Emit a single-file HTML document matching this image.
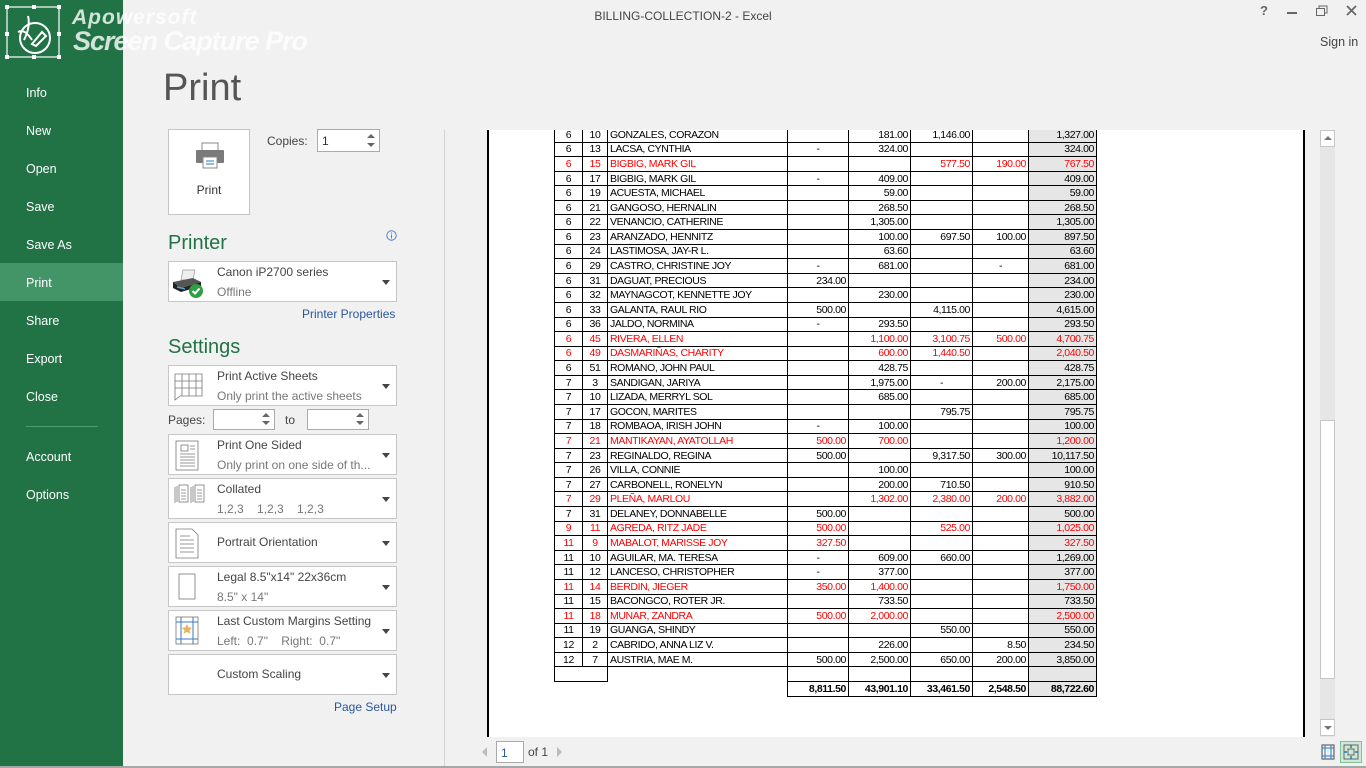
<!DOCTYPE html>
<html><head><meta charset="utf-8">
<style>
*{margin:0;padding:0;box-sizing:border-box}
body{width:1366px;height:768px;overflow:hidden;background:#f1f1f1;font-family:"Liberation Sans",sans-serif;position:relative;color:#444}
.abs{position:absolute}
#side{left:0;top:0;width:123px;height:768px;background:#217346}
#side div.m{position:absolute;left:26px;color:#fff;font-size:12.5px}
#sel{position:absolute;left:0;top:263px;width:123px;height:38px;background:#439467}
.box{position:absolute;left:168px;width:229px;background:#fff;border:1px solid #c6c6c6}
.box .t1{position:absolute;left:48px;top:3px;font-size:12px;color:#444;white-space:nowrap}
.box .t2{position:absolute;left:48px;top:23px;font-size:12px;color:#777;white-space:nowrap}
.box .arr{position:absolute;right:6px;top:50%;margin-top:-2px;width:0;height:0;border-left:4px solid transparent;border-right:4px solid transparent;border-top:5px solid #444}
.box svg{position:absolute;left:5px;top:5px}
.link{position:absolute;font-size:12px;color:#2b579a}
#page{left:487px;top:130px;width:818px;height:607px;background:#fff;border-left:2px solid #000;border-right:2px solid #000;overflow:hidden}
table{position:absolute;left:65px;top:-3px;border-collapse:collapse;table-layout:fixed;font-size:10.5px;letter-spacing:-0.4px;color:#000}
td{height:14.58px;padding:0 2px;border:1px solid #000;white-space:nowrap;overflow:hidden;line-height:12px;text-align:right}
td:nth-child(1),td:nth-child(2){text-align:center}
td:nth-child(3){text-align:left}
td:nth-child(8){background:#e6e6e6}
tr.r td{color:#f00}
tr.nb td{border-bottom:none}
tr.tot td{font-weight:bold}
</style></head><body>
<div id="side" class="abs">
<div id="sel"></div>
<div class="m" style="top:86px">Info</div>
<div class="m" style="top:124px">New</div>
<div class="m" style="top:162px">Open</div>
<div class="m" style="top:200px">Save</div>
<div class="m" style="top:238px">Save As</div>
<div class="m" style="top:276px">Print</div>
<div class="m" style="top:314px">Share</div>
<div class="m" style="top:352px">Export</div>
<div class="m" style="top:390px">Close</div>
<div style="position:absolute;left:26px;top:426px;width:72px;height:1px;background:#4f9a6e"></div>
<div class="m" style="top:450px">Account</div>
<div class="m" style="top:488px">Options</div>
</div>
<svg class="abs" style="left:4px;top:4px" width="58" height="56" viewBox="0 0 58 56"><rect x="3" y="3" width="52" height="50" fill="none" stroke="#fff" stroke-width="1.2"/><g fill="#fff"><rect x="1" y="1" width="4" height="4"/><rect x="28" y="1" width="4" height="4"/><rect x="53" y="1" width="4" height="4"/><rect x="1" y="28" width="4" height="4"/><rect x="53" y="28" width="4" height="4"/><rect x="1" y="51" width="4" height="4"/><rect x="28" y="51" width="4" height="4"/><rect x="53" y="51" width="4" height="4"/></g><circle cx="31" cy="34" r="15" fill="none" stroke="#fff" stroke-width="2"/><path d="M14 28c6-3 10 2 14 8M24 12c2 8 0 16-4 24M28 40l10-12 4 4-10 10z" fill="none" stroke="#fff" stroke-width="2"/></svg>
<div class="abs" style="left:72px;top:6px;font-size:21px;font-weight:bold;font-style:italic;color:rgba(255,255,255,.8);letter-spacing:1px">Apowersoft</div>
<div class="abs" style="left:73px;top:26px;font-size:27px;font-weight:bold;font-style:italic;color:rgba(255,255,255,.8);letter-spacing:-1px">Screen Capture Pro</div>

<div class="abs" style="left:0;width:1366px;top:9px;text-align:center;font-size:12px;color:#444">BILLING-COLLECTION-2 - Excel</div>
<div class="abs" style="left:1260px;top:3px;font-size:13px;font-weight:bold;color:#666">?</div>
<div class="abs" style="left:1287px;top:12px;width:10px;height:2px;background:#666"></div>
<svg class="abs" style="left:1316px;top:5px" width="12" height="12"><rect x="0.5" y="3.5" width="8" height="7" fill="none" stroke="#666"/><path d="M3 3V1h8v7H9" fill="none" stroke="#666"/></svg>
<svg class="abs" style="left:1346px;top:5px" width="11" height="11"><path d="M1 1l9 9M10 1l-9 9" stroke="#666" stroke-width="1.8"/></svg>
<div class="abs" style="left:1320px;top:35px;font-size:12.5px;color:#444">Sign in</div>

<div class="abs" style="left:163px;top:67px;font-size:38px;color:#555">Print</div>
<div class="abs" style="left:168px;top:129px;width:82px;height:86px;background:#fff;border:1px solid #c6c6c6">
<svg style="position:absolute;left:26px;top:12px" width="30" height="28"><rect x="7" y="1" width="16" height="8" fill="#fff" stroke="#888"/><rect x="1" y="8" width="28" height="13" rx="1" fill="#7a7a7a"/><rect x="8" y="15" width="14" height="11" fill="#fff" stroke="#888"/><path d="M11 19h8M11 22h8" stroke="#2b79c2"/></svg>
<div style="position:absolute;left:0;width:80px;top:53px;text-align:center;font-size:12px;color:#333">Print</div></div>
<div class="abs" style="left:267px;top:134px;font-size:12px">Copies:</div>
<div class="abs" style="left:317px;top:129px;width:63px;height:23px;background:#fff;border:1px solid #aaa;font-size:12px;color:#333;padding:4px 4px">1
<div style="position:absolute;right:4px;top:4px;border-left:4px solid transparent;border-right:4px solid transparent;border-bottom:4px solid #666"></div>
<div style="position:absolute;right:4px;top:13px;border-left:4px solid transparent;border-right:4px solid transparent;border-top:4px solid #666"></div></div>

<div class="abs" style="left:168px;top:232px;font-size:20px;color:#217346">Printer</div>
<svg class="abs" style="left:386px;top:230px" width="11" height="11"><circle cx="5.5" cy="5.5" r="4.7" fill="none" stroke="#4a86c8"/><path d="M5.5 4.5v4M5.5 2.5v1" stroke="#4a86c8"/></svg>
<div class="box" style="top:261px;height:41px">
<svg width="34" height="32" style="left:2px;top:6px"><path d="M12 2l12 0 -2 10H10z" fill="#eee" stroke="#999" stroke-width=".7"/><path d="M2 14l20-4 8 4-20 6z" fill="#555"/><path d="M2 14v6l8 4 20-6v-4l-20 6z" fill="#222"/><path d="M6 19l8 2" stroke="#69c" stroke-width="1.5"/><circle cx="25" cy="23" r="7" fill="#2ea043"/><path d="M21.5 23l2.5 2.5 4.5-5" fill="none" stroke="#fff" stroke-width="2"/></svg>
<div class="t1">Canon iP2700 series</div><div class="t2">Offline</div><div class="arr"></div></div>
<div class="link" style="left:302px;top:307px">Printer Properties</div>

<div class="abs" style="left:168px;top:336px;font-size:20px;color:#217346">Settings</div>
<div class="box" style="top:365px;height:41px"><svg width="30" height="30"><path d="M1 3h27v22H6l-5 4z" fill="none" stroke="#777" stroke-width=".8"/><path d="M1 10h27M1 17h27M8 3v22M15 3v22M22 3v22" stroke="#777" stroke-width=".8"/></svg><div class="t1">Print Active Sheets</div><div class="t2">Only print the active sheets</div><div class="arr"></div></div>
<div class="abs" style="left:168px;top:413px;font-size:12px">Pages:</div>
<div class="abs" style="left:213px;top:409px;width:62px;height:21px;background:#fff;border:1px solid #aaa"><div style="position:absolute;right:4px;top:3px;border-left:4px solid transparent;border-right:4px solid transparent;border-bottom:4px solid #666"></div><div style="position:absolute;right:4px;top:11px;border-left:4px solid transparent;border-right:4px solid transparent;border-top:4px solid #666"></div></div>
<div class="abs" style="left:285px;top:413px;font-size:12px">to</div>
<div class="abs" style="left:307px;top:409px;width:62px;height:21px;background:#fff;border:1px solid #aaa"><div style="position:absolute;right:4px;top:3px;border-left:4px solid transparent;border-right:4px solid transparent;border-bottom:4px solid #666"></div><div style="position:absolute;right:4px;top:11px;border-left:4px solid transparent;border-right:4px solid transparent;border-top:4px solid #666"></div></div>
<div class="box" style="top:434px;height:41px"><svg width="30" height="32"><rect x="2" y="1" width="22" height="29" fill="none" stroke="#777" stroke-width=".8"/><rect x="7" y="5" width="7" height="6" fill="none" stroke="#777" stroke-width=".8"/><path d="M16 6h5M16 9h5M6 14h15M6 17h15M6 20h15M6 23h15M6 26h15" stroke="#777" stroke-width=".8"/></svg><div class="t1">Print One Sided</div><div class="t2">Only print on one side of th...</div><div class="arr"></div></div>
<div class="box" style="top:478px;height:41px"><svg width="34" height="22"><path d="M1 3v16M3 2v16" stroke="#777" stroke-width=".8"/><rect x="5" y="1" width="9" height="17" fill="none" stroke="#777" stroke-width=".8"/><path d="M17 3v16M19 2v16" stroke="#777" stroke-width=".8"/><rect x="21" y="1" width="9" height="17" fill="none" stroke="#777" stroke-width=".8"/><path d="M7 6h5M7 9h5M7 12h5M7 15h5M23 6h5M23 9h5M23 12h5M23 15h5" stroke="#777" stroke-width=".8"/></svg><div class="t1">Collated</div><div class="t2">1,2,3&nbsp;&nbsp;&nbsp; 1,2,3&nbsp;&nbsp;&nbsp; 1,2,3</div><div class="arr"></div></div>
<div class="box" style="top:522px;height:41px"><svg width="30" height="32"><path d="M2 1h16l6 6v23H2z" fill="none" stroke="#777" stroke-width=".8"/><path d="M6 8h10M6 12h14M6 16h14M6 20h14M6 24h14" stroke="#777" stroke-width=".8"/></svg><div class="t1" style="top:12px">Portrait Orientation</div><div class="arr"></div></div>
<div class="box" style="top:566px;height:41px"><svg width="30" height="32"><rect x="5" y="2" width="16" height="25" fill="none" stroke="#777" stroke-width=".8"/></svg><div class="t1">Legal 8.5"x14" 22x36cm</div><div class="t2">8.5" x 14"</div><div class="arr"></div></div>
<div class="box" style="top:610px;height:41px"><svg width="30" height="32"><rect x="2" y="1" width="22" height="27" fill="none" stroke="#777" stroke-width=".8"/><path d="M2 6h22M2 23h22M7 1v27M19 1v27" stroke="#3a7ac0" stroke-width="1"/><path d="M13 8l1.6 3.4 3.6.4-2.7 2.4.8 3.6-3.3-1.9-3.3 1.9.8-3.6-2.7-2.4 3.6-.4z" fill="#e8b45a"/></svg><div class="t1">Last Custom Margins Setting</div><div class="t2">Left:&nbsp; 0.7"&nbsp;&nbsp;&nbsp; Right:&nbsp; 0.7"</div><div class="arr"></div></div>
<div class="box" style="top:654px;height:41px"><div class="t1" style="top:12px">Custom Scaling</div><div class="arr"></div></div>
<div class="link" style="left:334px;top:700px">Page Setup</div>

<div class="abs" style="left:444px;top:130px;width:1px;height:638px;background:#d4d4d4"></div>

<div id="page" class="abs">
<table>
<colgroup><col style="width:28px"><col style="width:25px"><col style="width:180px"><col style="width:61px"><col style="width:62px"><col style="width:62px"><col style="width:56px"><col style="width:68px"></colgroup>
<tr><td>6</td><td>10</td><td>GONZALES, CORAZON</td><td></td><td>181.00</td><td>1,146.00</td><td></td><td>1,327.00</td></tr>
<tr><td>6</td><td>13</td><td>LACSA, CYNTHIA</td><td style="text-align:center">-</td><td>324.00</td><td></td><td></td><td>324.00</td></tr>
<tr class="r nb"><td>6</td><td>15</td><td>BIGBIG, MARK GIL</td><td></td><td></td><td>577.50</td><td>190.00</td><td>767.50</td></tr>
<tr><td>6</td><td>17</td><td>BIGBIG, MARK GIL</td><td style="text-align:center">-</td><td>409.00</td><td></td><td></td><td>409.00</td></tr>
<tr><td>6</td><td>19</td><td>ACUESTA, MICHAEL</td><td></td><td>59.00</td><td></td><td></td><td>59.00</td></tr>
<tr><td>6</td><td>21</td><td>GANGOSO, HERNALIN</td><td></td><td>268.50</td><td></td><td></td><td>268.50</td></tr>
<tr><td>6</td><td>22</td><td>VENANCIO, CATHERINE</td><td></td><td>1,305.00</td><td></td><td></td><td>1,305.00</td></tr>
<tr><td>6</td><td>23</td><td>ARANZADO, HENNITZ</td><td></td><td>100.00</td><td>697.50</td><td>100.00</td><td>897.50</td></tr>
<tr><td>6</td><td>24</td><td>LASTIMOSA, JAY-R L.</td><td></td><td>63.60</td><td></td><td></td><td>63.60</td></tr>
<tr><td>6</td><td>29</td><td>CASTRO, CHRISTINE JOY</td><td style="text-align:center">-</td><td>681.00</td><td></td><td style="text-align:center">-</td><td>681.00</td></tr>
<tr><td>6</td><td>31</td><td>DAGUAT, PRECIOUS</td><td>234.00</td><td></td><td></td><td></td><td>234.00</td></tr>
<tr><td>6</td><td>32</td><td>MAYNAGCOT, KENNETTE JOY</td><td></td><td>230.00</td><td></td><td></td><td>230.00</td></tr>
<tr><td>6</td><td>33</td><td>GALANTA, RAUL RIO</td><td>500.00</td><td></td><td>4,115.00</td><td></td><td>4,615.00</td></tr>
<tr><td>6</td><td>36</td><td>JALDO, NORMINA</td><td style="text-align:center">-</td><td>293.50</td><td></td><td></td><td>293.50</td></tr>
<tr class="r"><td>6</td><td>45</td><td>RIVERA, ELLEN</td><td></td><td>1,100.00</td><td>3,100.75</td><td>500.00</td><td>4,700.75</td></tr>
<tr class="r"><td>6</td><td>49</td><td>DASMARIÑAS, CHARITY</td><td></td><td>600.00</td><td>1,440.50</td><td></td><td>2,040.50</td></tr>
<tr><td>6</td><td>51</td><td>ROMANO, JOHN PAUL</td><td></td><td>428.75</td><td></td><td></td><td>428.75</td></tr>
<tr><td>7</td><td>3</td><td>SANDIGAN, JARIYA</td><td></td><td>1,975.00</td><td style="text-align:center">-</td><td>200.00</td><td>2,175.00</td></tr>
<tr><td>7</td><td>10</td><td>LIZADA, MERRYL SOL</td><td></td><td>685.00</td><td></td><td></td><td>685.00</td></tr>
<tr><td>7</td><td>17</td><td>GOCON, MARITES</td><td></td><td></td><td>795.75</td><td></td><td>795.75</td></tr>
<tr><td>7</td><td>18</td><td>ROMBAOA, IRISH JOHN</td><td style="text-align:center">-</td><td>100.00</td><td></td><td></td><td>100.00</td></tr>
<tr class="r"><td>7</td><td>21</td><td>MANTIKAYAN, AYATOLLAH</td><td>500.00</td><td>700.00</td><td></td><td></td><td>1,200.00</td></tr>
<tr><td>7</td><td>23</td><td>REGINALDO, REGINA</td><td>500.00</td><td></td><td>9,317.50</td><td>300.00</td><td>10,117.50</td></tr>
<tr><td>7</td><td>26</td><td>VILLA, CONNIE</td><td></td><td>100.00</td><td></td><td></td><td>100.00</td></tr>
<tr><td>7</td><td>27</td><td>CARBONELL, RONELYN</td><td></td><td>200.00</td><td>710.50</td><td></td><td>910.50</td></tr>
<tr class="r"><td>7</td><td>29</td><td>PLEÑA, MARLOU</td><td></td><td>1,302.00</td><td>2,380.00</td><td>200.00</td><td>3,882.00</td></tr>
<tr><td>7</td><td>31</td><td>DELANEY, DONNABELLE</td><td>500.00</td><td></td><td></td><td></td><td>500.00</td></tr>
<tr class="r nb"><td>9</td><td>11</td><td>AGREDA, RITZ JADE</td><td>500.00</td><td></td><td>525.00</td><td></td><td>1,025.00</td></tr>
<tr class="r"><td>11</td><td>9</td><td>MABALOT, MARISSE JOY</td><td>327.50</td><td></td><td></td><td></td><td>327.50</td></tr>
<tr><td>11</td><td>10</td><td>AGUILAR, MA. TERESA</td><td style="text-align:center">-</td><td>609.00</td><td>660.00</td><td></td><td>1,269.00</td></tr>
<tr><td>11</td><td>12</td><td>LANCESO, CHRISTOPHER</td><td style="text-align:center">-</td><td>377.00</td><td></td><td></td><td>377.00</td></tr>
<tr class="r"><td>11</td><td>14</td><td>BERDIN, JIEGER</td><td>350.00</td><td>1,400.00</td><td></td><td></td><td>1,750.00</td></tr>
<tr><td>11</td><td>15</td><td>BACONGCO, ROTER JR.</td><td></td><td>733.50</td><td></td><td></td><td>733.50</td></tr>
<tr class="r"><td>11</td><td>18</td><td>MUNAR, ZANDRA</td><td>500.00</td><td>2,000.00</td><td></td><td></td><td>2,500.00</td></tr>
<tr><td>11</td><td>19</td><td>GUANGA, SHINDY</td><td></td><td></td><td>550.00</td><td></td><td>550.00</td></tr>
<tr><td>12</td><td>2</td><td>CABRIDO, ANNA LIZ V.</td><td></td><td>226.00</td><td></td><td>8.50</td><td>234.50</td></tr>
<tr><td>12</td><td>7</td><td>AUSTRIA, MAE M.</td><td>500.00</td><td>2,500.00</td><td>650.00</td><td>200.00</td><td>3,850.00</td></tr>
<tr><td style="border-right:none"></td><td style="border-left:none"></td><td style="border-right:none;border-bottom:none;border-left:none"></td><td></td><td></td><td></td><td></td><td></td></tr>
<tr class="tot"><td style="border:none"></td><td style="border:none"></td><td style="border:none;background:#fff"></td><td>8,811.50</td><td>43,901.10</td><td>33,461.50</td><td>2,548.50</td><td>88,722.60</td></tr>
</table>
</div>

<div class="abs" style="left:1320px;top:130px;width:15px;height:607px;background:#e6e6e6"></div>
<div class="abs" style="left:1320px;top:130px;width:15px;height:17px;background:#fff;border:1px solid #c6c6c6"><div style="position:absolute;left:3px;top:5px;border-left:4px solid transparent;border-right:4px solid transparent;border-bottom:4px solid #777"></div></div>
<div class="abs" style="left:1320px;top:420px;width:15px;height:259px;background:#fff;border:1px solid #c6c6c6"></div>
<div class="abs" style="left:1320px;top:719px;width:15px;height:17px;background:#fff;border:1px solid #c6c6c6"><div style="position:absolute;left:3px;top:6px;border-left:4px solid transparent;border-right:4px solid transparent;border-top:4px solid #777"></div></div>

<div class="abs" style="left:482px;top:747px;border-top:5px solid transparent;border-bottom:5px solid transparent;border-right:5px solid #bbb"></div>
<div class="abs" style="left:496px;top:741px;width:28px;height:22px;background:#fff;border:1px solid #aaa;font-size:12px;color:#2b579a;padding:4px 4px">1</div>
<div class="abs" style="left:528px;top:745px;font-size:12px;color:#444">of 1</div>
<div class="abs" style="left:557px;top:747px;border-top:5px solid transparent;border-bottom:5px solid transparent;border-left:5px solid #bbb"></div>
<svg class="abs" style="left:1321px;top:744px" width="14" height="16"><rect x="1" y="1" width="12" height="14" fill="none" stroke="#666" stroke-width="1.2"/><path d="M4 1v14M10 1v14M1 4h12M1 12h12" stroke="#2b79c2"/></svg>
<div class="abs" style="left:1340px;top:741px;width:22px;height:22px;background:#cfe8d8;border:1px solid #7fc09a"></div>
<svg class="abs" style="left:1343px;top:744px" width="16" height="16"><rect x="1" y="1" width="14" height="14" fill="none" stroke="#666"/><rect x="5" y="5" width="6" height="6" fill="none" stroke="#666"/><path d="M8 1v3M8 12v3M1 8h3M12 8h3" stroke="#2b79c2" stroke-width="1.5"/></svg>
<div class="abs" style="left:0;top:766px;width:1366px;height:2px;background:#a6a6a6"></div>
</body></html>
